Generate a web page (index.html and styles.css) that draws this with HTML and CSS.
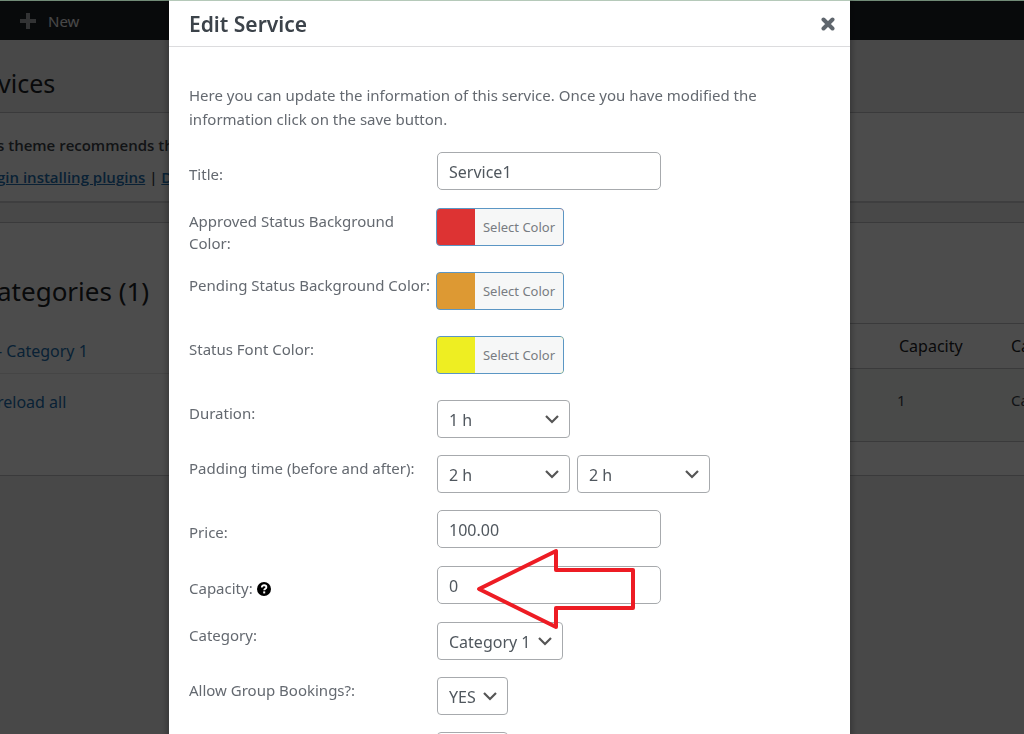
FILE: index.html
```
<!DOCTYPE html>
<html lang="en">
<head>
  <meta charset="UTF-8">
  <meta name="viewport" content="width=device-width, initial-scale=1.0">
  <title>Edit Service</title>
  <link rel="stylesheet" href="styles.css">
</head>
<body>
  <div class="page">
    <header class="admin-bar">
      <a href="#" class="new-link">
        <svg width="18" height="18" viewBox="0 0 18 18"><path d="M7 1h4v6h6v4h-6v6H7v-6H1V7h6z" fill="#a7aaad"/></svg>
        New
      </a>
    </header>

    <div class="page-title">
      <h1>vices</h1>
    </div>

    <section class="notice">
      <p>s theme recommends th</p>
      <p><a href="#">gin installing plugins</a> | <a href="#">D</a></p>
    </section>

    <main class="content">
      <div class="categories">
        <h2>ategories (1)</h2>
        <ul>
          <li><a href="#">- Category 1</a></li>
          <li><a href="#">reload all</a></li>
        </ul>
      </div>
      <table class="services">
        <thead>
          <tr><th>Capacity</th><th>Ca</th></tr>
        </thead>
        <tbody>
          <tr><td>1</td><td>Ca</td></tr>
        </tbody>
      </table>
    </main>
  </div>

  <!-- Edit service popup -->
  <div class="overlay">
    <div class="modal" role="dialog" aria-labelledby="modal-title">
      <div class="modal-header">
        <h2 id="modal-title">Edit Service</h2>
        <button type="button" class="close" aria-label="Close">
          <svg width="14" height="14" viewBox="0 0 14 14"><path d="M2.5 2.5l9 9M11.5 2.5l-9 9" stroke="#5f666d" stroke-width="4" stroke-linecap="round"/></svg>
        </button>
      </div>

      <form class="modal-body">
        <p class="intro">Here you can update the information of this service. Once you have modified the information click on the save button.</p>

        <div class="row text-row">
          <label for="title">Title:</label>
          <input type="text" id="title" value="Service1">
        </div>

        <div class="row color-row">
          <label for="approved">Approved Status Background Color:</label>
          <button type="button" id="approved" class="color-button approved"><span>Select Color</span></button>
        </div>

        <div class="row color-row">
          <label for="pending">Pending Status Background Color:</label>
          <button type="button" id="pending" class="color-button pending"><span>Select Color</span></button>
        </div>

        <div class="row color-row">
          <label for="font-color">Status Font Color:</label>
          <button type="button" id="font-color" class="color-button font-color"><span>Select Color</span></button>
        </div>

        <div class="row select-row">
          <label for="duration">Duration:</label>
          <select id="duration" class="time"><option>1 h</option></select>
        </div>

        <div class="row select-row">
          <label for="before">Padding time (before and after):</label>
          <div class="pair">
            <select id="before" class="time"><option>2 h</option></select>
            <select id="after" class="time" aria-label="Padding time after"><option>2 h</option></select>
          </div>
        </div>

        <div class="row text-row">
          <label for="price">Price:</label>
          <input type="text" id="price" value="100.00">
        </div>

        <div class="row text-row">
          <label for="capacity">Capacity:
            <svg class="help" width="14" height="14" viewBox="0 0 14 14"><circle cx="7" cy="7" r="7" fill="#000"/><path d="M4.8 5.4c0-3 4.6-2.7 4.6-.2C9.4 6.7 7.2 6.7 7.2 8.3" fill="none" stroke="#fff" stroke-width="1.8"/><rect x="6.2" y="9.4" width="2" height="2" fill="#fff"/></svg>
          </label>
          <div class="marked">
            <input type="text" id="capacity" value="0">
            <svg class="arrow" width="170" height="90" viewBox="0 0 170 90"><path d="M10 44L87 6v19h77v38H87v19z" fill="none" stroke="#ed1c24" stroke-width="4" stroke-linejoin="round"/></svg>
          </div>
        </div>

        <div class="row select-row">
          <label for="category">Category:</label>
          <select id="category" class="category"><option>Category 1</option></select>
        </div>

        <div class="row select-row">
          <label for="group">Allow Group Bookings?:</label>
          <select id="group" class="yes-no"><option>YES</option></select>
        </div>

        <div class="row select-row">
          <span></span>
          <select class="yes-no"></select>
        </div>
      </form>
    </div>
  </div>
</body>
</html>
```
FILE: styles.css
```
* {
  box-sizing: border-box;
}

html, body {
  height: 100%;
  margin: 0;
  overflow: hidden;
}

body {
  font-family: "Noto Sans", "Open Sans", sans-serif;
  font-size: 15px;
  color: #3c434a;
  background: #f0f0f1;
}

h1, h2, p, ul {
  margin: 0;
  padding: 0;
  font-weight: 400;
}

a {
  color: #2271b1;
}

/* page behind the popup */
.admin-bar {
  display: flex;
  align-items: center;
  height: 40px;
  padding: 2px 19px 0;
  background: #1d2327;
}

.new-link {
  display: flex;
  align-items: center;
  gap: 11px;
  color: #f0f0f1;
  text-decoration: none;
}

.page-title {
  height: 72px;
  padding-top: 25px;
}

.page-title h1 {
  margin-left: -2px;
  font-size: 25px;
  line-height: 36px;
  color: #1d2327;
}

.notice {
  height: 91px;
  padding-top: 16px;
  background: #fff;
  border-top: 1px solid #c3c4c7;
  border-bottom: 2px solid #d0d1d3;
  line-height: 32px;
}

.notice p {
  margin-left: -3px;
  font-family: "Open Sans", sans-serif;
  font-weight: 600;
}

.content {
  display: flex;
  justify-content: space-between;
  height: 254px;
  margin-top: 19px;
  background: #fff;
  border-top: 1px solid #c3c4c7;
  border-bottom: 1px solid #c3c4c7;
}

.categories {
  width: 170px;
  padding-top: 48px;
}

.categories h2 {
  margin-left: -3px;
  font-size: 26px;
  line-height: 40px;
  color: #1d2327;
}

.categories ul {
  margin-top: 19px;
  list-style: none;
}

.categories li {
  padding-top: 7px;
  margin-left: -3px;
  font-size: 16px;
  line-height: 42px;
}

.categories li:first-child {
  height: 44px;
  padding-top: 0;
  border-bottom: 1px solid #e6e6e6;
}

.categories li a {
  text-decoration: none;
}

.services {
  width: 174px;
  height: 119px;
  margin-top: 100px;
  border-collapse: collapse;
  table-layout: fixed;
}

.services th {
  width: 110px;
  height: 45px;
  padding: 0 0 0 49px;
  font-size: 16px;
  font-weight: 400;
  text-align: left;
  color: #1d2327;
  border-top: 1px solid #c3c4c7;
  border-bottom: 1px solid #c3c4c7;
}

.services td {
  padding: 0 0 10px 47px;
  background: #f4f8f6;
  border-bottom: 1px solid #c3c4c7;
}

.services th + th,
.services td + td {
  width: auto;
  padding-left: 51px;
}

/* popup */
.overlay {
  position: fixed;
  inset: 0;
  display: flex;
  justify-content: center;
  padding-right: 5px;
  background: rgba(0, 0, 0, 0.7);
  border-top: 1px solid #718b77;
}

.modal {
  width: 681px;
  height: 120vh;
  margin-top: -1px;
  background: #fff;
  border-top: 1px solid #b5c9b9;
  box-shadow: 0 0 8px rgba(0, 0, 0, 0.4);
}

.modal-header {
  display: flex;
  align-items: center;
  justify-content: space-between;
  height: 46px;
  padding: 0 15px 0 20px;
  border-bottom: 1px solid #dcdcde;
}

.modal-header h2 {
  font-size: 21px;
  font-weight: 600;
  color: #3c434a;
}

.close {
  padding: 0;
  border: 0;
  background: none;
  line-height: 0;
  cursor: pointer;
}

.modal-body {
  padding: 36px 20px 0;
  color: #646970;
}

.intro {
  margin-bottom: 21px;
  line-height: 24px;
}

.row {
  display: grid;
  grid-template-columns: 248px 1fr;
  justify-items: start;
  align-items: start;
}

.row label {
  padding-top: 2px;
  line-height: 22px;
}

.text-row {
  height: 56px;
}

.text-row label {
  padding-top: 11px;
}

.color-row {
  height: 64px;
}

.select-row {
  height: 55px;
}

input, select, button {
  font-family: inherit;
  font-size: 16px;
  color: #50575e;
}

input {
  width: 224px;
  height: 38px;
  padding: 1px 11px 0;
  border: 1px solid #a7aaad;
  border-radius: 5px;
}

select {
  height: 38px;
  padding: 2px 28px 0 11px;
  border: 1px solid #a7aaad;
  border-radius: 4px;
  appearance: none;
  background: #fff url("data:image/svg+xml,%3Csvg xmlns='http://www.w3.org/2000/svg' width='14' height='10' viewBox='0 0 14 10'%3E%3Cpath d='M1 2l6 6 6-6' fill='none' stroke='%23555' stroke-width='2.2'/%3E%3C/svg%3E") no-repeat right 10px center;
}

.time {
  width: 133px;
}

.category {
  width: 126px;
}

.yes-no {
  width: 71px;
}

.pair {
  display: flex;
  gap: 7px;
}

.color-button {
  width: 128px;
  height: 38px;
  margin-left: -1px;
  padding: 0 0 0 38px;
  border: 1px solid #5b96c4;
  border-radius: 4px;
  overflow: hidden;
  font-size: 13px;
  color: #787c82;
}

.color-button span {
  display: block;
  padding-top: 1px;
  line-height: 35px;
  background: #f6f7f7;
}

.approved {
  background: #dd3333;
}

.pending {
  background: #dd9933;
}

.font-color {
  background: #eeee22;
}

.help {
  vertical-align: -2px;
}

.marked {
  position: relative;
}

/* points at the capacity box */
.arrow {
  position: absolute;
  top: -21px;
  left: 32px;
  pointer-events: none;
}
```
